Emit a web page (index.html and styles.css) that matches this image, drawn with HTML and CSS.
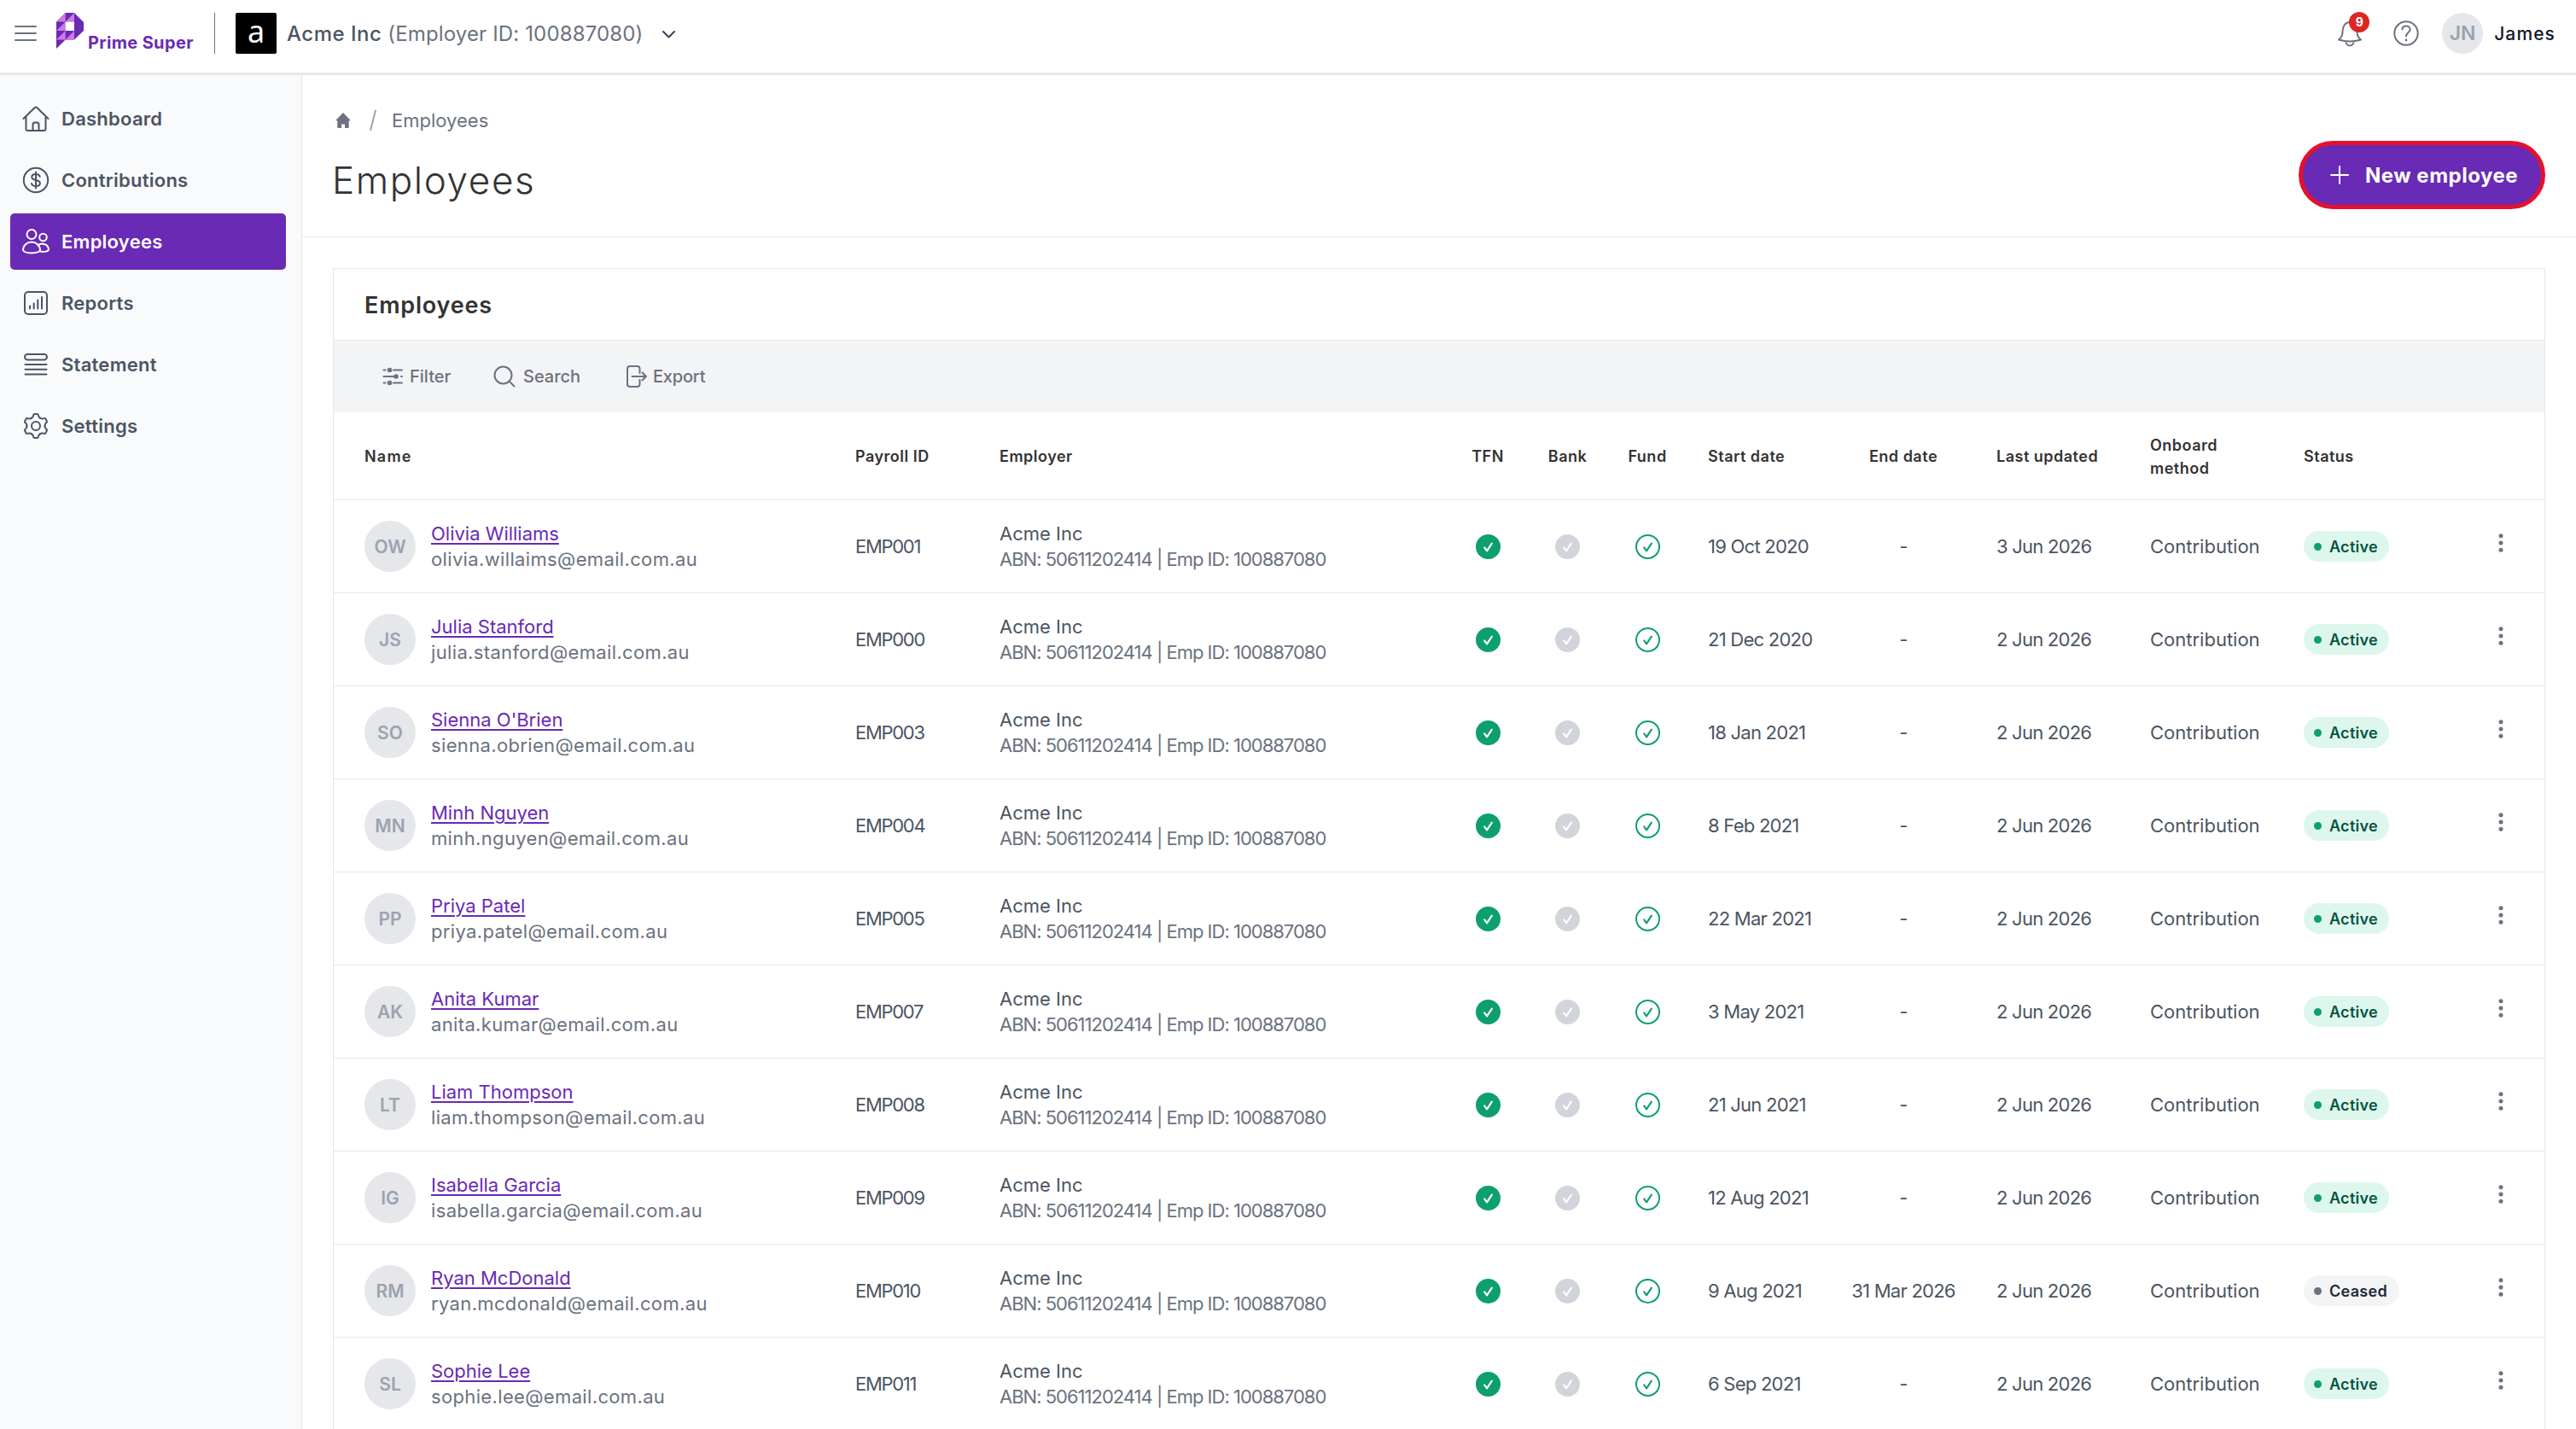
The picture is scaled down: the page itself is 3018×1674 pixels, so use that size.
FILE: index.html
```html
<!DOCTYPE html>
<html lang="en">
<head>
    <meta charset="UTF-8">
    <meta name="viewport" content="width=device-width, initial-scale=1.0">
    <title>Prime Super - Employees</title>
    <link rel="stylesheet" href="styles.css">
</head>
<body>
    <!-- shared icons -->
    <svg class="sprite" aria-hidden="true">
        <symbol id="check" viewBox="0 0 30 30">
            <path d="M10.5 16l3 4 6-9" fill="none" stroke="currentColor" stroke-width="2.2" stroke-linecap="round" stroke-linejoin="round"/>
        </symbol>
        <symbol id="dots" viewBox="0 0 6 24">
            <circle cx="3" cy="3.7" r="2.5"/><circle cx="3" cy="12" r="2.5"/><circle cx="3" cy="20.3" r="2.5"/>
        </symbol>
    </svg>

    <header class="topbar">
        <svg class="menu-icon" width="28" height="20" viewBox="0 0 28 20"><path d="M2 2h24M2 10h24M2 18h24"/></svg>
        <div class="logo">
            <svg width="32" height="42" viewBox="0 0 32 42">
                <path fill="#692ab5" d="M10.7 0H21L32 11v10L21 31.5H10.7L0 42V10.5z"/>
                <path fill="#cd78e4" d="M0 10.5L10.7 0v10.5zM10.700 10.500L21 0v10.500zM0 21l10.700-10.500V21zM0 31.500L10.700 21v10.500zM10.700 31.500L21 21v10.500z"/>
                <path fill="#fff" d="M10.7 10.5H21V21H10.7z"/>
            </svg>
            <span class="logo-text">Prime Super</span>
        </div>
        <div class="divider"></div>
        <div class="company-logo">a</div>
        <div class="company"><b>Acme Inc</b> <span>(Employer ID: 100887080)</span></div>
        <svg class="chevron" width="17" height="11" viewBox="0 0 17 11"><path d="M2 2l6.500 6.500L15 2"/></svg>

        <div class="user-area">
            <div class="bell">
                <svg width="30" height="34" viewBox="0 0 30 34"><path d="M2 24.500c3-2 4.500-5 4.500-9.500C6.500 9 9.500 4 15 4s8.500 5 8.500 11c0 4.500 1.500 7.500 4.500 9.500C20 27 10 27 2 24.500zM10.500 26.500c0 3 2 5 4.500 5s4.500-2 4.500-5"/></svg>
                <span class="badge">9</span>
            </div>
            <svg class="help" width="30" height="30" viewBox="0 0 30 30"><circle cx="15" cy="15" r="13.700"/><path d="M10.500 10.500c0-2.500 2-4 4.500-4s4.700 1.600 4.700 4c0 3.500-4.700 3.700-4.700 8"/><path class="dot" d="M15 22.800v.2"/></svg>
            <div class="user-avatar">JN</div>
            <span class="user-name">James</span>
        </div>
    </header>

    <div class="layout">
        <nav class="sidebar">
            <a class="nav-item">
                <svg viewBox="0 0 32 32"><path d="M1.500 16L14.500 3.200q1.500-1.400 3 0L30.500 16M4.500 14v14q0 2 2 2h19q2 0 2-2V14M12.500 30v-7q0-2.500 2.500-2.500h2q2.500 0 2.500 2.500v7"/></svg>
                <span>Dashboard</span>
            </a>
            <a class="nav-item">
                <svg viewBox="0 0 32 32"><circle cx="16" cy="16" r="14.200"/><path d="M20.800 11.800C20 9.800 18.200 9 16 9c-2.700 0-4.700 1.300-4.700 3.400 0 4.900 9.600 2.200 9.600 7.200 0 2.200-2.100 3.500-4.900 3.500-2.500 0-4.400-1-5.100-3.100M16 6.500v19"/></svg>
                <span>Contributions</span>
            </a>
            <a class="nav-item active">
                <svg viewBox="0 0 32 32"><circle cx="11" cy="7.500" r="5.500"/><circle cx="24.500" cy="11" r="4.300"/><path d="M1 26c0-5.500 4.500-9.500 10-9.500S21 20.500 21 26c-1.500 4.500-18.500 4.500-20 0zM18.500 20.500c4-3.500 12-2 12.500 5-.5 2-6 3-10 2"/></svg>
                <span>Employees</span>
            </a>
            <a class="nav-item">
                <svg viewBox="0 0 32 32"><rect x="3" y="3" width="26" height="26" rx="4"/><path d="M9 19.500v3M13.700 16.500v6M18.300 12.500v10M23 9v13.500"/></svg>
                <span>Reports</span>
            </a>
            <a class="nav-item">
                <svg viewBox="0 0 32 32"><rect x="3" y="4" width="26" height="6.500" rx="3.200"/><path d="M3.500 16h25M3.500 21.800h25M3.500 27.500h25"/></svg>
                <span>Statement</span>
            </a>
            <a class="nav-item">
                <svg viewBox="-16 -16 32 32">
                    <circle r="5"/>
                    <path id="tooth" d="M-5.250-9.100Q-3.400-10.200-3-12L-2.800-12.900Q-2.600-14-1.600-14H1.600Q2.600-14 2.800-12.900L3-12Q3.400-10.200 5.250-9.100"/>
                    <use href="#tooth" transform="rotate(60)"/>
                    <use href="#tooth" transform="rotate(120)"/>
                    <use href="#tooth" transform="rotate(180)"/>
                    <use href="#tooth" transform="rotate(240)"/>
                    <use href="#tooth" transform="rotate(300)"/>
                </svg>
                <span>Settings</span>
            </a>
        </nav>

        <main class="content">
            <div class="page-header">
                <div>
                    <div class="breadcrumb">
                        <svg width="18" height="18" viewBox="0 0 18 18"><path d="M9 0l9 9.300h-2.300V17q0 1-1 1H11v-4.500H7V18H3.300q-1 0-1-1V9.300H0z"/></svg>
                        <svg class="slash" width="8" height="24" viewBox="0 0 8 24"><path d="M1 24L7 0"/></svg>
                        <span>Employees</span>
                    </div>
                    <h1>Employees</h1>
                </div>
                <button class="new-btn">
                    <svg width="22" height="22" viewBox="0 0 22 22"><path d="M11 1v20M1 11h20"/></svg>
                    <span>New employee</span>
                </button>
            </div>

            <section class="card">
                <h2>Employees</h2>
                <div class="toolbar">
                    <a class="tool filter">
                        <svg width="24" height="24" viewBox="0 0 24 24"><path d="M1.500 4.500h2M13 4.500h10M1.500 12h12M22 12h1M1.500 19.500h2M13 19.500h10"/><g class="knob"><circle cx="8.500" cy="4.500" r="2.800"/><circle cx="16" cy="12" r="2.800"/><circle cx="8.500" cy="19.500" r="2.800"/></g></svg>
                        <span>Filter</span>
                    </a>
                    <a class="tool search">
                        <svg width="26" height="26" viewBox="0 0 26 26"><circle cx="11.500" cy="11.500" r="10"/><path d="M18.500 18.500l6 6"/></svg>
                        <span>Search</span>
                    </a>
                    <a class="tool export">
                        <svg width="24" height="26" viewBox="0 0 24 26"><path d="M15.500 9V4q0-3-3-3H4Q1 1 1 4v18q0 3 3 3h8.500q3 0 3-3v-5M6.500 13H23M18.500 8.500L23 13l-4.500 4.500"/></svg>
                        <span>Export</span>
                    </a>
                </div>

                <div class="row head">
                    <div class="name">Name</div>
                    <div>Payroll ID</div>
                    <div>Employer</div>
                    <div class="center">TFN</div>
                    <div class="center">Bank</div>
                    <div class="center">Fund</div>
                    <div class="start">Start date</div>
                    <div class="center">End date</div>
                    <div class="updated">Last updated</div>
                    <div>Onboard<br>method</div>
                    <div>Status</div>
                    <div></div>
                </div>
                <div id="rows"></div>
            </section>
        </main>
    </div>

    <script src="script.js"></script>
</body>
</html>
```
FILE: styles.css
```css
* {
    box-sizing: border-box;
}
body {
    margin: 0;
    height: 1674px;
    overflow: hidden;
    font-family: Inter, "Open Sans", sans-serif;
    font-size: 22px;
    color: #4b5563;
    background: #fff;
}
svg {
    display: block;
    flex-shrink: 0;
    fill: none;
    stroke: currentColor;
    stroke-width: 2;
    stroke-linecap: round;
    stroke-linejoin: round;
}
.sprite {
    width: 0;
    height: 0;
    position: absolute;
}

/* top bar */
.topbar {
    display: flex;
    align-items: center;
    height: 88px;
    padding: 0 24px 7px 16px;
    border-bottom: 3px solid #e5e7eb;
    white-space: nowrap;
}
.menu-icon {
    color: #6b7280;
}
.logo {
    display: flex;
    margin-left: 22px;
    width: 185px;
    height: 48px;
}
.logo svg {
    stroke: none;
}
.logo-text {
    margin: 22px 0 0 5px;
    font-size: 20px;
    line-height: 27px;
    font-weight: 700;
    letter-spacing: 0.35px;
    color: #692ab5;
}
.divider {
    width: 1px;
    height: 48px;
    background: #6b7280;
}
.company-logo {
    width: 48px;
    height: 48px;
    margin: 0 12px 0 24px;
    border-radius: 2px;
    background: #000;
    color: #fff;
    font-family: "Noto Sans", sans-serif;
    font-size: 36px;
    line-height: 43px;
    text-align: center;
}
.company {
    font-size: 24px;
    letter-spacing: 0.15px;
    color: #6b7280;
}
.company b {
    font-weight: 500;
    letter-spacing: 0.5px;
    color: #4b5563;
}
.chevron {
    margin: 2px 0 0 21px;
    color: #374151;
}
.user-area {
    display: flex;
    align-items: center;
    margin-left: auto;
    color: #6b7280;
}
.bell {
    position: relative;
    margin-right: 36px;
}
.badge {
    position: absolute;
    left: 14px;
    top: -8px;
    width: 24px;
    height: 24px;
    border-radius: 50%;
    background: #dc2626;
    color: #fff;
    font-size: 14px;
    line-height: 23px;
    font-weight: 700;
    text-align: center;
}
.help {
    margin-right: 27px;
}
.help .dot {
    stroke-width: 2.6;
}
.user-avatar {
    width: 48px;
    height: 48px;
    margin-right: 13px;
    border-radius: 50%;
    background: #e5e7eb;
    color: #9ca3af;
    font-weight: 600;
    font-size: 23px;
    line-height: 48px;
    text-align: center;
}
.user-name {
    font-size: 21px;
    font-weight: 500;
    letter-spacing: 1.1px;
    color: #111827;
}

/* sidebar */
.layout {
    display: flex;
    height: 1586px;
}
.sidebar {
    width: 354px;
    flex-shrink: 0;
    padding: 18px 18px 0 12px;
    background: #f9fafc;
    border-right: 1px solid #e5e7eb;
}
.nav-item {
    display: flex;
    align-items: center;
    gap: 14px;
    height: 66px;
    margin-bottom: 6px;
    padding-left: 14px;
    border-radius: 5px;
    font-weight: 600;
    letter-spacing: 0.25px;
}
.nav-item svg {
    width: 32px;
    height: 32px;
}
.nav-item.active {
    background: #692ab5;
    color: #fff;
}

/* page header */
.content {
    flex: 1;
}
.page-header {
    display: flex;
    justify-content: space-between;
    height: 190px;
    padding: 37px 36px 0 37px;
    border-bottom: 1px solid #e5e7eb;
}
.breadcrumb {
    display: flex;
    align-items: center;
    height: 32px;
    padding-left: 2px;
    color: #6b7280;
}
.breadcrumb svg {
    fill: #6b7280;
    stroke: none;
}
.breadcrumb .slash {
    margin: 0 18px 0 22px;
    stroke: #9ca3af;
}
h1 {
    margin: 24px 0 0 -2px;
    font-size: 44px;
    line-height: 60px;
    font-weight: 300;
    letter-spacing: 1.6px;
    color: #333;
}
.new-btn {
    display: flex;
    align-items: center;
    gap: 19px;
    width: 289px;
    height: 80px;
    margin-top: 40px;
    padding: 0 0 0 32px;
    border: 5px solid #e5112b;
    border-radius: 40px;
    background: #692ab5;
    color: #fff;
    font-family: inherit;
    font-size: 24px;
    font-weight: 700;
    letter-spacing: 0.5px;
    white-space: nowrap;
}

/* employees card */
.card {
    margin: 36px 36px 0;
    height: 1400px;
    border: 1px solid #e5e7eb;
}
h2 {
    height: 83px;
    margin: 0;
    padding-left: 36px;
    font-size: 27px;
    line-height: 85px;
    font-weight: 600;
    letter-spacing: 0.8px;
    color: #333;
}
.toolbar {
    display: flex;
    height: 85px;
    padding-left: 57px;
    border-top: 1px solid #e5e7eb;
    background: #f3f4f6;
}
.tool {
    display: flex;
    align-items: center;
    font-size: 20px;
    font-weight: 500;
    color: #6b7280;
}
.tool .knob {
    fill: #6b7280;
    stroke: none;
}
.filter {
    width: 130px;
    gap: 8px;
}
.search {
    width: 156px;
    gap: 9px;
}
.export {
    gap: 7px;
    letter-spacing: -0.2px;
}

.row {
    display: grid;
    grid-template-columns: 575px 169px 525px 94px 93px 94px 183px 140px 219px 180px 206px 50px;
    align-items: center;
    height: 109px;
    padding-left: 36px;
    border-bottom: 1px solid #e5e7eb;
    white-space: nowrap;
}
.head {
    height: 103px;
    padding-top: 1px;
    font-size: 18px;
    line-height: 27px;
    font-weight: 600;
    letter-spacing: 0.5px;
    color: #333;
}
.head .name {
    letter-spacing: 1.2px;
}
.center {
    display: flex;
    justify-content: center;
}
.start {
    padding-left: 24px;
}
.updated {
    padding-left: 39px;
}
.date {
    letter-spacing: -0.75px;
}
.person {
    display: flex;
    align-items: center;
    gap: 18px;
    line-height: 30px;
}
.avatar {
    width: 60px;
    height: 60px;
    border-radius: 50%;
    background: #e5e7eb;
    color: #9ca3af;
    font-size: 21px;
    font-weight: 600;
    line-height: 61px;
    text-align: center;
}
.person a {
    color: #692ab5;
    text-decoration: underline;
    text-decoration-thickness: 2px;
    text-underline-offset: 3px;
}
.sub {
    color: #6b7280;
}
.email {
    letter-spacing: 0.35px;
}
.payroll {
    letter-spacing: -1.3px;
}
.employer {
    line-height: 30px;
}
.abn {
    letter-spacing: -1px;
}
.mark {
    width: 29px;
    height: 29px;
    border-radius: 50%;
    color: #fff;
}
.mark.tfn {
    background: #0e9f6e;
}
.mark.bank {
    background: #d1d5db;
}
.mark.fund {
    border: 2px solid #0e9f6e;
    color: #0e9f6e;
}
.mark svg {
    width: 100%;
    height: 100%;
}
.mark.fund svg {
    width: 29px;
    height: 29px;
    margin: -2px;
}
.status {
    display: inline-flex;
    align-items: center;
    gap: 9px;
    width: 100px;
    height: 36px;
    padding-left: 12px;
    border-radius: 18px;
    background: #def7ec;
    color: #03543f;
    font-size: 18px;
    font-weight: 600;
    letter-spacing: 0.3px;
}
.status::before {
    content: "";
    width: 9px;
    height: 9px;
    border-radius: 50%;
    background: #0e9f6e;
}
.status.ceased {
    width: 112px;
    background: #f3f4f6;
    color: #1f2937;
}
.status.ceased::before {
    background: #6b7280;
}
.dots {
    width: 6px;
    height: 24px;
    margin-bottom: 8px;
    fill: #6b7280;
    stroke: none;
}
```
FILE: script.js
```js
const employees = [
    ["OW", "Olivia Williams", "olivia.willaims", "EMP001", "19 Oct 2020", "-", "3 Jun 2026"],
    ["JS", "Julia Stanford", "julia.stanford", "EMP000", "21 Dec 2020", "-", "2 Jun 2026"],
    ["SO", "Sienna O'Brien", "sienna.obrien", "EMP003", "18 Jan 2021", "-", "2 Jun 2026"],
    ["MN", "Minh Nguyen", "minh.nguyen", "EMP004", "8 Feb 2021", "-", "2 Jun 2026"],
    ["PP", "Priya Patel", "priya.patel", "EMP005", "22 Mar 2021", "-", "2 Jun 2026"],
    ["AK", "Anita Kumar", "anita.kumar", "EMP007", "3 May 2021", "-", "2 Jun 2026"],
    ["LT", "Liam Thompson", "liam.thompson", "EMP008", "21 Jun 2021", "-", "2 Jun 2026"],
    ["IG", "Isabella Garcia", "isabella.garcia", "EMP009", "12 Aug 2021", "-", "2 Jun 2026"],
    ["RM", "Ryan McDonald", "ryan.mcdonald", "EMP010", "9 Aug 2021", "31 Mar 2026", "2 Jun 2026"],
    ["SL", "Sophie Lee", "sophie.lee", "EMP011", "6 Sep 2021", "-", "2 Jun 2026"]
];

const mark = (type) => `<div class="center"><div class="mark ${type}"><svg><use href="#check"/></svg></div></div>`;

document.getElementById("rows").innerHTML = employees.map(([initials, name, mail, id, start, end, updated]) => {
    // an end date means the employee has left
    const status = end === "-" ? "Active" : "Ceased";
    return `
    <div class="row">
        <div class="person">
            <div class="avatar">${initials}</div>
            <div><a>${name}</a><div class="sub email">${mail}@email.com.au</div></div>
        </div>
        <div class="payroll">${id}</div>
        <div class="employer">Acme Inc<div class="sub abn">ABN: 50611202414 | Emp ID: 100887080</div></div>
        ${mark("tfn")}${mark("bank")}${mark("fund")}
        <div class="start date">${start}</div>
        <div class="center date">${end}</div>
        <div class="updated date">${updated}</div>
        <div>Contribution</div>
        <div><span class="status ${status.toLowerCase()}">${status}</span></div>
        <div class="center"><svg class="dots"><use href="#dots"/></svg></div>
    </div>`;
}).join("");
```
